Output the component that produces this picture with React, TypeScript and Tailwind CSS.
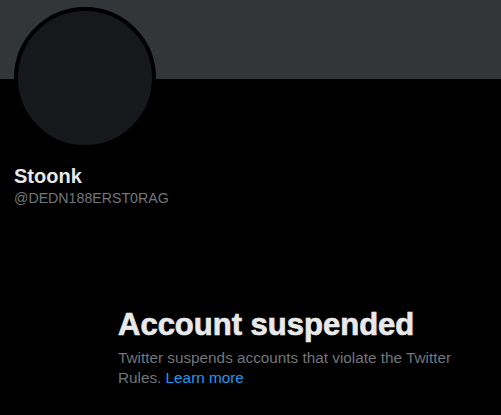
import React from "react";

const App = () => {
  return (
    <div className="w-[501px] h-[415px] bg-black overflow-hidden font-['Liberation_Sans',Arial,sans-serif]">
      <div className="h-[79px] bg-[#333639]" />

      <div className="px-[14px]">
        <div className="-mt-[72px] w-[142px] h-[142px] rounded-full border-4 border-black bg-[#16181c]" />

        <div className="mt-[15px] flex flex-col">
          <span className="text-[20px] leading-[24px] font-bold text-[#e7e9ea]">
            Stoonk
          </span>
          <span className="text-[14.2px] leading-[20px] text-[#71767b]">
            @DEDN188ERST0RAG
          </span>
        </div>
      </div>

      <div className="mt-[99px] ml-[118px] w-[345px]">
        <h1 className="text-[31px] leading-[36px] font-extrabold text-[#e7e9ea] [-webkit-text-stroke:0.7px_#e7e9ea]">
          Account suspended
        </h1>
        <p className="mt-[5px] text-[15.3px] leading-[20px] text-[#71767b]">
          Twitter suspends accounts that violate the Twitter Rules.{" "}
          <a href="#" className="text-[#1d9bf0]">
            Learn more
          </a>
        </p>
      </div>
    </div>
  );
};

export default App;
